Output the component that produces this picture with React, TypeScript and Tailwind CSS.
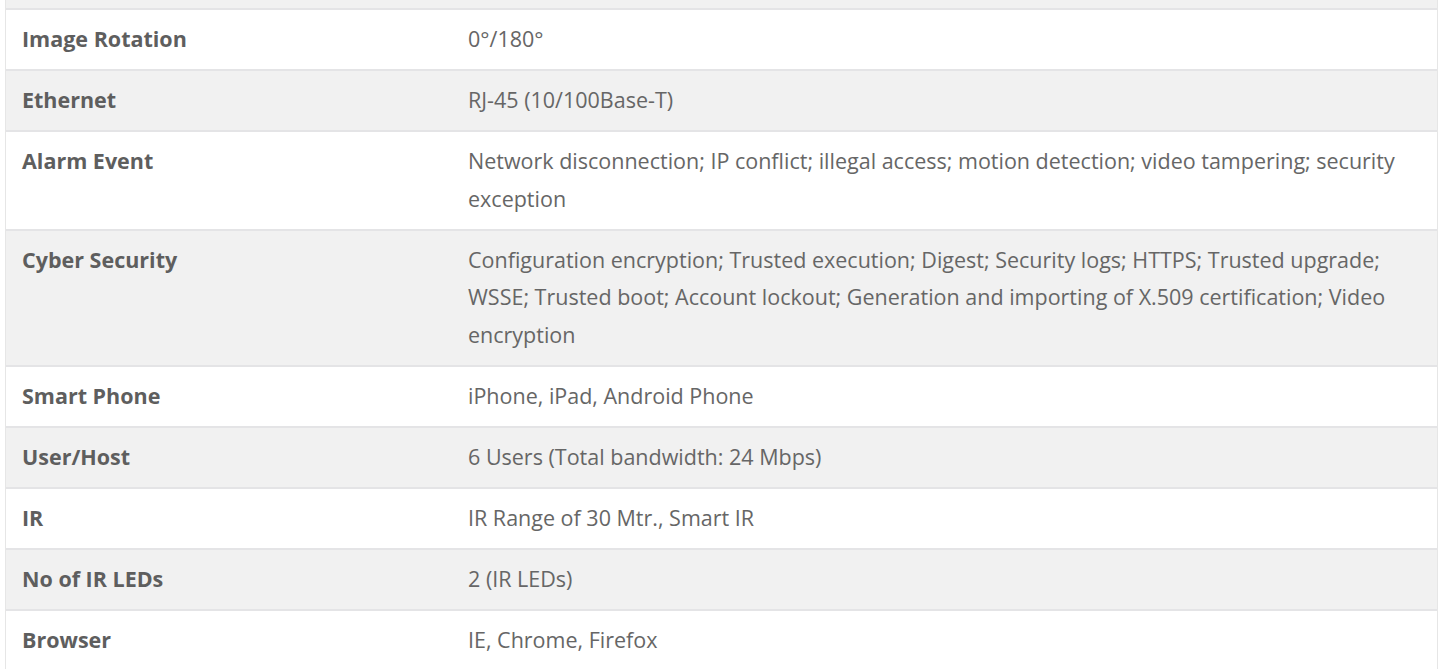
import React from 'react'

const rows = [
  { label: 'Image Rotation', value: '0°/180°' },
  { label: 'Ethernet', value: 'RJ-45 (10/100Base-T)' },
  {
    label: 'Alarm Event',
    value:
      'Network disconnection; IP conflict; illegal access; motion detection; video tampering; security exception',
  },
  {
    label: 'Cyber Security',
    value:
      'Configuration encryption; Trusted execution; Digest; Security logs; HTTPS; Trusted upgrade; WSSE; Trusted boot; Account lockout; Generation and importing of X.509 certification; Video encryption',
  },
  { label: 'Smart Phone', value: 'iPhone, iPad, Android Phone' },
  { label: 'User/Host', value: '6 Users (Total bandwidth: 24 Mbps)' },
  { label: 'IR', value: 'IR Range of 30 Mtr., Smart IR' },
  { label: 'No of IR LEDs', value: '2 (IR LEDs)' },
  { label: 'Browser', value: 'IE, Chrome, Firefox' },
]

export default function App() {
  return (
    <div className="bg-white h-[669px] overflow-hidden font-['Open_Sans',sans-serif] text-[21.5px]">
      <div className="mx-[5px] -mt-[51px] w-[1433px] border-x border-[#e6e6e6]">
        <div className="bg-[#f1f1f1] border-b-2 border-[#e4e4e6] h-[61px]"></div>
        {rows.map((r, i) => (
          <div
            key={r.label}
            className={`grid grid-cols-[446px_1fr] border-b-2 border-[#e4e4e6] ${i % 2 === 0 ? 'bg-white' : 'bg-[#f1f1f1]'}`}
          >
            <div className="pl-[16px] pr-4 pt-[10px] pb-[11.5px] leading-[37.5px] font-bold text-[#5e5e5e]">{r.label}</div>
            <div className="pl-[16px] pr-6 pt-[10px] pb-[11.5px] leading-[37.5px] text-[#666]">{r.value}</div>
          </div>
        ))}
      </div>
    </div>
  )
}
